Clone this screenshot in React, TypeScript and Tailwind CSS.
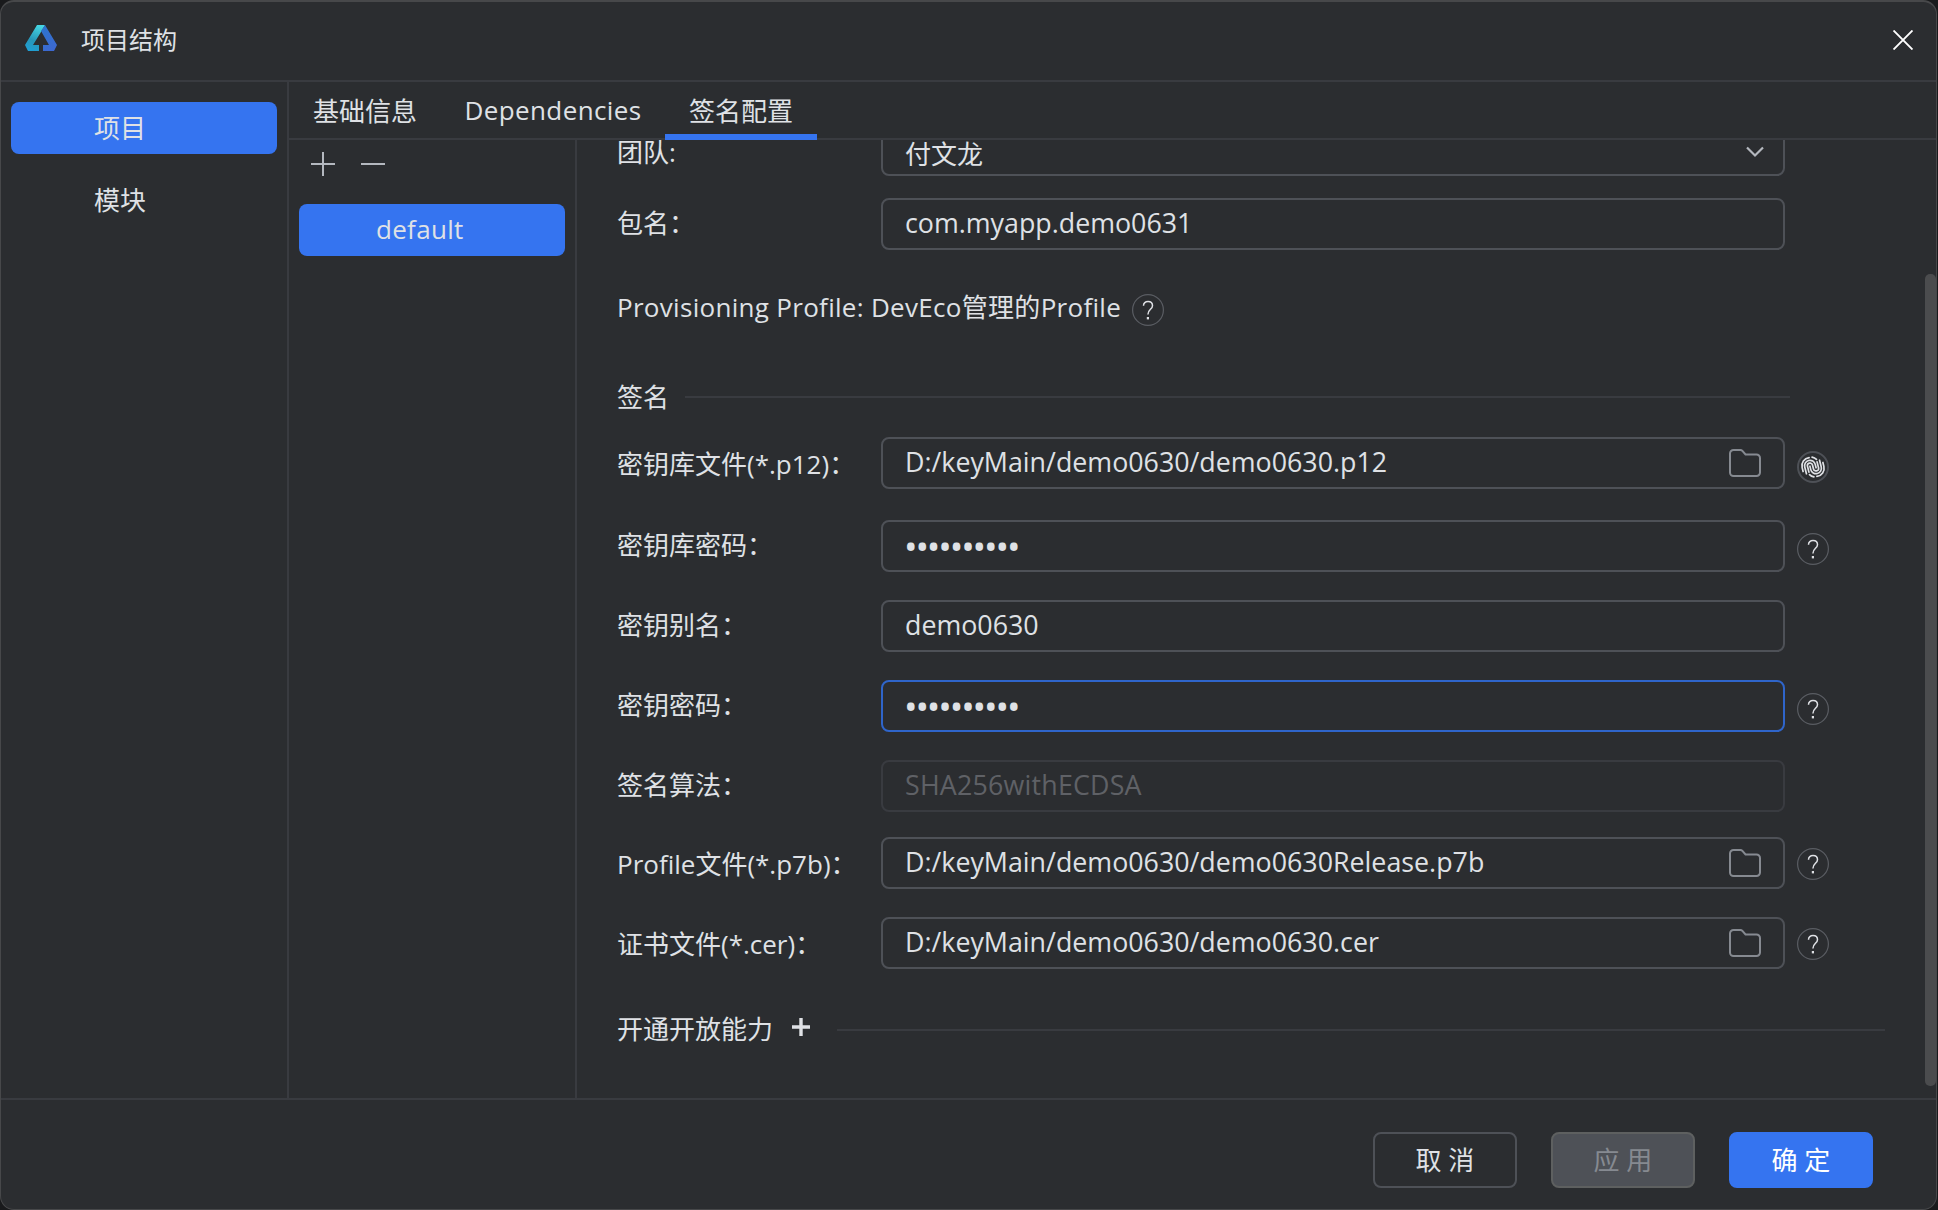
import { ReactNode } from 'react'

import clsx from 'clsx'

interface FieldProps {
    label: string
    className?: string
    labelClassName?: string
    inputClassName?: string
    value: ReactNode
    icon?: ReactNode
    extra?: ReactNode
}

const tabs = [
    { title: '基础信息', className: 'w-[152px] leading-[58px]' },
    { title: 'Dependencies', className: 'w-[224px] leading-[56px] tracking-[0.4px]' },
    { title: '签名配置', className: 'w-[152px] leading-[58px]', active: true },
]

const Logo = () => (
    <svg width="32" height="26" viewBox="0 0 32 26" className="ml-[24px] mt-[24px]">
        <defs>
            <linearGradient id="left" x1="0.6" y1="0" x2="0.3" y2="1">
                <stop offset="0" stopColor="#45d5e2" />
                <stop offset="0.6" stopColor="#2796b8" />
                <stop offset="1" stopColor="#1f9fd4" />
            </linearGradient>
            <linearGradient id="right" x1="0.3" y1="0" x2="0.7" y2="1">
                <stop offset="0" stopColor="#2d74cd" />
                <stop offset="1" stopColor="#3d68d0" />
            </linearGradient>
        </defs>
        <path d="M12 0H20L16 7L8 20H14V26H3L0 20Z" fill="url(#left)" />
        <path d="M16 6L20 0L32 20L29 26H18V20H24Z" fill="url(#right)" />
    </svg>
)

const Folder = () => (
    <svg width="32" height="28" viewBox="0 0 32 28" fill="none" stroke="#868a91" strokeWidth="2">
        <path d="M1 4.500A3.500 3.500 0 0 1 4.500 1H11.500Q12.500 1 13.200 1.700L16.500 5.500H27.500A3.500 3.500 0 0 1 31 9V23.500A3.500 3.500 0 0 1 27.500 27H4.500A3.500 3.500 0 0 1 1 23.500Z" />
    </svg>
)

const Help = ({ className }: { className?: string }) => (
    <svg width="32" height="32" viewBox="0 0 32 32" fill="none" className={clsx('shrink-0', className)}>
        <circle cx="16" cy="16" r="15.400" stroke="#5a5d63" strokeWidth="1.200" />
        <path
            d="M11.500 11.800C11.500 9 13.500 7.600 16 7.600C18.700 7.600 20.500 9.200 20.500 11.700C20.500 15.300 15.900 15.500 15.900 20.400"
            stroke="#dfe1e5"
            strokeWidth="1.500"
        />
        <rect x="14.800" y="23" width="2.200" height="2.400" fill="#dfe1e5" />
    </svg>
)

const Fingerprint = () => (
    <svg width="32" height="32" viewBox="0 0 32 32" fill="none" className="mt-[8px] shrink-0">
        <circle cx="16" cy="16" r="15" stroke="#4e5157" strokeWidth="2" />
        <g stroke="#dfe1e5" strokeWidth="1.700" strokeLinecap="round" transform="rotate(-14 16 16)">
            <path d="M10.800 20V14A2.600 2.600 0 0 1 16 14V18A2.600 2.600 0 0 0 21.200 18V12" />
            <path d="M8 21V14A5.400 5.400 0 0 1 18.800 14V17.500" />
            <path d="M24 11V18A5.400 5.400 0 0 1 13.200 18V14.500" />
            <path d="M5.300 18V14A8.200 8.200 0 0 1 14.500 5.900" />
            <path d="M26.700 14V18A8.200 8.200 0 0 1 17.500 26.100" />
            <path d="M17.500 6.200A8 8 0 0 1 21.200 9.500" />
            <path d="M14.500 25.800A8 8 0 0 1 10.800 22.500" />
        </g>
    </svg>
)

function Field({ label, className, labelClassName, inputClassName, value, icon, extra }: FieldProps) {
    return (
        <div className={clsx('flex h-[52px] shrink-0 pl-px', className)}>
            <div
                className={clsx(
                    'w-[264px] shrink-0 whitespace-nowrap',
                    labelClassName || 'leading-[50px]',
                )}
            >
                {label}
            </div>
            <div
                className={clsx(
                    'flex w-[904px] shrink-0 items-center justify-between rounded-[8px] border-2 px-[22px]',
                    inputClassName || 'border-[#4e5157]',
                )}
            >
                <span className="whitespace-nowrap pb-[2px] text-[26.8px] leading-[46px]">{value}</span>
                {icon}
            </div>
            {extra && <div className="ml-3 flex items-center">{extra}</div>}
        </div>
    )
}

const Dots = () => (
    <span className="-ml-px block h-[48px] pt-[3px] text-[36px] leading-[46px] tracking-[-2.1px]">
        ••••••••••
    </span>
)

export default function App() {
    return (
        <div className="h-[1210px] w-[1938px] bg-[#191a1c] pr-px font-['Open_Sans','Noto_Sans_CJK_SC',sans-serif] text-[26px] text-[#dfe1e5]">
            <div className="flex h-full flex-col overflow-hidden rounded-[14px] border-x border-b border-t-2 border-[#47484a] bg-[#2b2d30]">
                <header className="flex h-[80px] shrink-0 border-b-2 border-[#393b40]">
                    <div className="-mt-px">
                        <Logo />
                    </div>
                    <h1 className="ml-[24px] text-[24px] leading-[75px]">项目结构</h1>
                    <svg
                        width="20"
                        height="20"
                        viewBox="0 0 20 20"
                        className="ml-auto mr-[23px] mt-[28px]"
                        stroke="#fff"
                        strokeWidth="1.900"
                    >
                        <path d="M0.500 0.500L19.500 19.500M19.500 0.500L0.500 19.500" />
                    </svg>
                </header>

                <div className="flex min-h-0 flex-1">
                    <aside className="w-[288px] shrink-0 border-r-2 border-[#393b40] pl-[10px] pt-[20px] leading-[52px]">
                        <div className="h-[52px] w-[266px] rounded-[8px] bg-[#3574f0] pl-[83px]">项目</div>
                        <div className="mt-[20px] h-[52px] pl-[83px]">模块</div>
                    </aside>

                    <main className="flex min-w-0 flex-1 flex-col">
                        <nav className="flex h-[58px] shrink-0 border-b-2 border-[#393b40]">
                            {tabs.map(tab => (
                                <div
                                    key={tab.title}
                                    className={clsx(
                                        'h-[58px] shrink-0 text-center',
                                        tab.className,
                                        tab.active && 'border-b-[6px] border-[#3574f0]',
                                    )}
                                >
                                    {tab.title}
                                </div>
                            ))}
                        </nav>

                        <div className="flex min-h-0 flex-1">
                            <section className="w-[288px] shrink-0 border-r-2 border-[#393b40] pl-[10px]">
                                <div className="flex h-[64px] pl-[12px] pt-[12px]">
                                    <svg width="76" height="24" stroke="#b4b8bf" strokeWidth="2">
                                        <path d="M0 12H24M12 0V24M50 12H74" />
                                    </svg>
                                </div>
                                <div className="h-[52px] w-[266px] rounded-[8px] bg-[#3574f0] pl-[77px] leading-[50px] tracking-[0.3px]">
                                    default
                                </div>
                            </section>

                            {/* the form is scrolled down, so its first row slides under the tabs */}
                            <section className="flex min-w-0 flex-1 justify-between overflow-hidden">
                                <div className="-mt-[16px] flex flex-col pl-[39px]">
                                    <Field
                                        label="团队:"
                                        labelClassName="pt-[2px] leading-[52px]"
                                        value={<span className="text-[26px]">付文龙</span>}
                                        inputClassName="border-[#4e5157] pt-[9px]"
                                        icon={
                                            <svg
                                                width="18"
                                                height="12"
                                                fill="none"
                                                stroke="#b4b8bf"
                                                strokeWidth="2.200"
                                                className="-mr-[3px] -mt-[5px]"
                                            >
                                                <path d="M1 1.500L9 9.500L17 1.500" />
                                            </svg>
                                        }
                                    />
                                    <Field label="包名：" className="mt-[22px]" value="com.myapp.demo0631" />

                                    <div className="mt-[44px] flex h-[32px] shrink-0 items-center pl-px">
                                        <span className="-mt-[6px] leading-[28px] tracking-[0.3px]">
                                            Provisioning Profile: DevEco管理的Profile
                                        </span>
                                        <Help className="ml-[11px]" />
                                    </div>

                                    <div className="mt-[55px] flex h-[32px] shrink-0 items-center pl-px">
                                        <span className="leading-[32px]">签名</span>
                                        <div className="ml-[16px] h-[2px] w-[1105px] bg-[#393b40]" />
                                    </div>

                                    <Field
                                        label="密钥库文件(*.p12)："
                                        className="mt-[24px]"
                                        labelClassName="pt-px leading-[52px]"
                                        value="D:/keyMain/demo0630/demo0630.p12"
                                        icon={<Folder />}
                                        extra={<Fingerprint />}
                                    />
                                    <Field
                                        label="密钥库密码："
                                        className="mt-[31px]"
                                        value={<Dots />}
                                        extra={<Help className="mt-[6px]" />}
                                    />
                                    <Field label="密钥别名：" className="mt-[28px]" value="demo0630" />
                                    <Field
                                        label="密钥密码："
                                        className="mt-[28px]"
                                        value={<Dots />}
                                        inputClassName="border-[#2f65ca]"
                                        extra={<Help className="mt-[6px]" />}
                                    />
                                    <Field
                                        label="签名算法："
                                        className="mt-[28px]"
                                        value={<span className="tracking-[0.2px]">SHA256withECDSA</span>}
                                        inputClassName="border-[#393b40] text-[#5f6166]"
                                    />
                                    <Field
                                        label="Profile文件(*.p7b)："
                                        className="mt-[25px]"
                                        labelClassName="pt-px leading-[52px]"
                                        value="D:/keyMain/demo0630/demo0630Release.p7b"
                                        icon={<Folder />}
                                        extra={<Help className="mt-[2px]" />}
                                    />
                                    <Field
                                        label="证书文件(*.cer)："
                                        className="mt-[28px]"
                                        labelClassName="pt-px leading-[52px]"
                                        value="D:/keyMain/demo0630/demo0630.cer"
                                        icon={<Folder />}
                                        extra={<Help className="mt-[2px]" />}
                                    />

                                    <div className="mt-[45px] flex h-[32px] shrink-0 items-center pl-px">
                                        <span className="-mt-[2px] leading-[32px]">开通开放能力</span>
                                        <svg
                                            width="18"
                                            height="18"
                                            stroke="#dfe1e5"
                                            strokeWidth="3.400"
                                            className="-mt-[6px] ml-[19px]"
                                        >
                                            <path d="M0 9H18M9 0V18" />
                                        </svg>
                                        <div className="ml-[27px] h-[2px] w-[1048px] bg-[#393b40]" />
                                    </div>
                                </div>
                                <div className="mt-[134px] h-[812px] w-[11px] shrink-0 rounded-[5px] bg-[#4b4c4e]" />
                            </section>
                        </div>
                    </main>
                </div>

                <footer className="flex h-[111px] shrink-0 justify-end gap-[34px] border-t-2 border-[#393b40] pr-[63px] pt-[32px] text-center leading-[52px]">
                    <button className="h-[56px] w-[144px] rounded-[8px] border-2 border-[#4e5157]">取 消</button>
                    <button className="h-[56px] w-[144px] rounded-[8px] border-2 border-[#5e6060] bg-[#4e5157] text-[#868a91]">
                        应 用
                    </button>
                    <button className="h-[56px] w-[144px] rounded-[8px] border-2 border-[#3574f0] bg-[#3574f0] text-white">
                        确 定
                    </button>
                </footer>
            </div>
        </div>
    )
}
